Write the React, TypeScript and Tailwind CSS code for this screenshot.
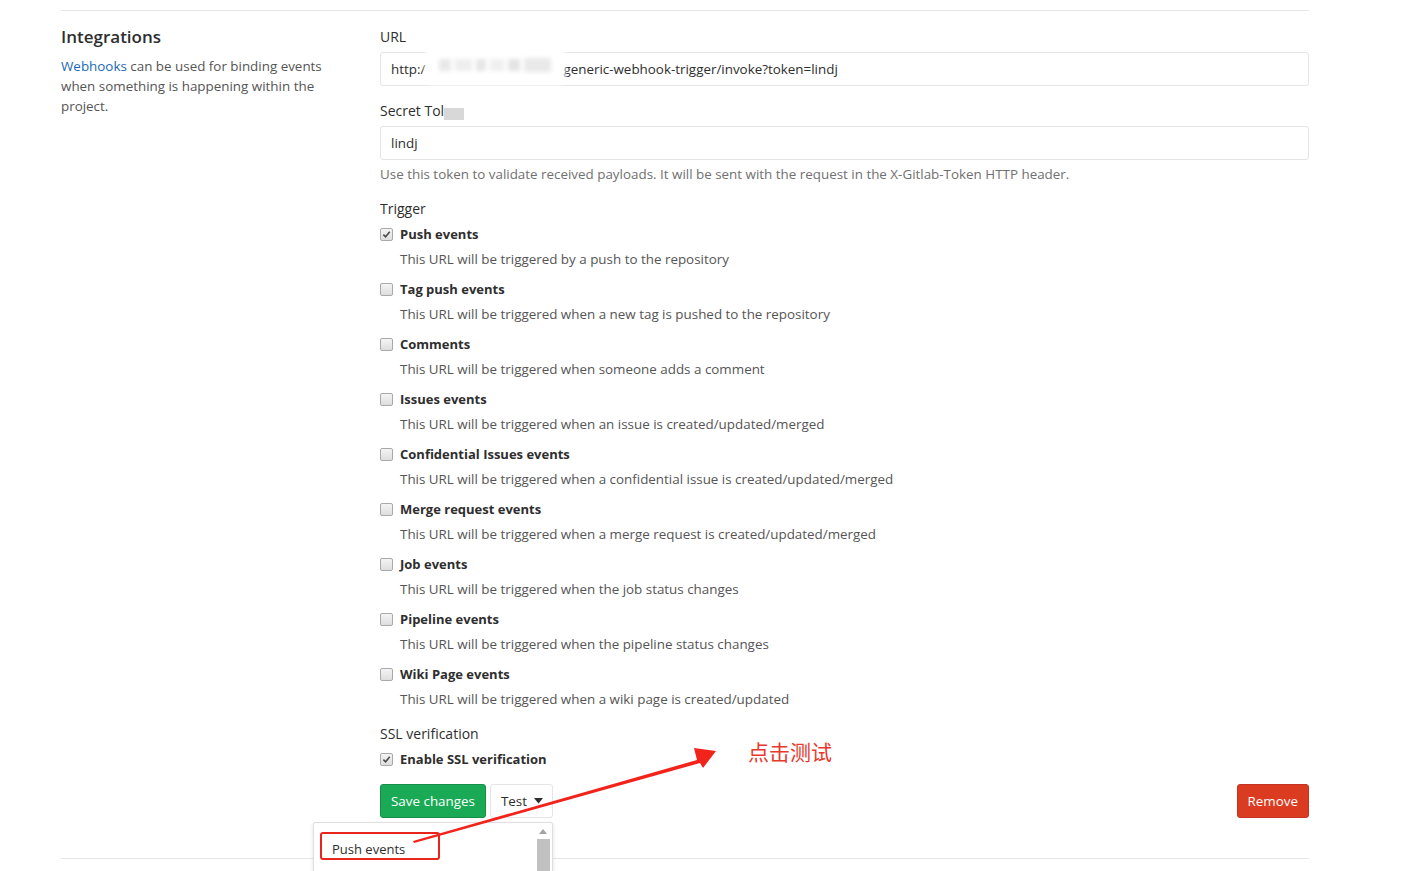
import React from "react";

const triggers = [
  { title: "Push events", desc: "This URL will be triggered by a push to the repository", checked: true },
  { title: "Tag push events", desc: "This URL will be triggered when a new tag is pushed to the repository" },
  { title: "Comments", desc: "This URL will be triggered when someone adds a comment" },
  { title: "Issues events", desc: "This URL will be triggered when an issue is created/updated/merged" },
  { title: "Confidential Issues events", desc: "This URL will be triggered when a confidential issue is created/updated/merged" },
  { title: "Merge request events", desc: "This URL will be triggered when a merge request is created/updated/merged" },
  { title: "Job events", desc: "This URL will be triggered when the job status changes" },
  { title: "Pipeline events", desc: "This URL will be triggered when the pipeline status changes" },
  { title: "Wiki Page events", desc: "This URL will be triggered when a wiki page is created/updated" },
];

function Check({ checked }: { checked?: boolean }) {
  return (
    <span className="w-[13px] h-[13px] shrink-0 rounded-[2px] border border-[#a9a9a9] bg-gradient-to-b from-[#f4f4f4] to-[#dedede] flex items-center justify-center">
      {checked && (
        <svg width="9" height="9" viewBox="0 0 10 10">
          <path d="M1.5 5.2 L4 7.6 L8.6 2" fill="none" stroke="#4a4a4a" strokeWidth="1.8" />
        </svg>
      )}
    </span>
  );
}

export default function App() {
  return (
    <div
      className="relative w-[1414px] h-[871px] overflow-hidden bg-white text-[#2e2e2e]"
      style={{ fontFamily: '"Open Sans", "Noto Sans", sans-serif' }}
    >
      <div className="ml-[61px] w-[1248px] mt-[10px] border-t border-[#e5e5e5] pt-[16px] flex">
        {/* left column */}
        <div className="w-[319px] shrink-0">
          <h4 className="text-[17px] font-semibold leading-[20px] text-[#2e2e2e]">Integrations</h4>
          <p className="mt-[9px] w-[268px] text-[13.4px] leading-[20px] text-[#555]">
            <span className="text-[#1b69b6]">Webhooks</span> can be used for binding events when something is happening within the project.
          </p>
        </div>

        {/* right column */}
        <div className="flex-1 text-[13.4px]">
          <div className="leading-[20px] text-[14px]">URL</div>
          <div className="relative mt-[5px] h-[34px] border border-[#e5e5e5] rounded-[3px] px-[10px] flex items-center">
            <span>http:/</span>
            <span className="w-[138px] shrink-0" />
            <span>generic-webhook-trigger/invoke?token=lindj</span>
            <div className="absolute left-[44px] top-[-8px] w-[140px] h-[40px] bg-white rounded-[8px] blur-[2px] flex items-center gap-[4px] px-[14px]">
              <span className="w-[12px] h-[12px] bg-[#e8e8e8]" />
              <span className="w-[18px] h-[12px] bg-[#eeeeee]" />
              <span className="w-[10px] h-[12px] bg-[#e6e6e6]" />
              <span className="w-[14px] h-[12px] bg-[#efefef]" />
              <span className="w-[12px] h-[12px] bg-[#e4e4e4]" />
              <span className="w-[28px] h-[14px] bg-[#e9e9e9]" />
            </div>
          </div>

          <div className="mt-[15px] leading-[20px] text-[14px] flex items-center">
            Secret Tol<span className="w-[20px] h-[12px] bg-[#d8d8d8] mt-[6px] blur-[0.5px]" />
          </div>
          <div className="mt-[5px] h-[34px] border border-[#e5e5e5] rounded-[3px] px-[10px] flex items-center">
            lindj
          </div>
          <p className="mt-[5px] leading-[18px] text-[#707070]">
            Use this token to validate received payloads. It will be sent with the request in the X-Gitlab-Token HTTP header.
          </p>

          <div className="mt-[16px] leading-[20px] text-[14px]">Trigger</div>
          <ul className="mt-[5px]">
            {triggers.map((t) => (
              <li key={t.title} className="mb-[10px]">
                <div className="flex items-center gap-[7px] leading-[20px]">
                  <Check checked={t.checked} />
                  <span className="font-bold text-[13px] text-[#2e2e2e]">{t.title}</span>
                </div>
                <div className="mt-[5px] pl-[20px] leading-[20px] text-[#555]">{t.desc}</div>
              </li>
            ))}
          </ul>

          <div className="mt-[15px] leading-[20px] text-[14px]">SSL verification</div>
          <div className="mt-[5px] flex items-center gap-[7px] leading-[20px]">
            <Check checked />
            <span className="font-bold text-[13px]">Enable SSL verification</span>
          </div>

          <div className="relative mt-[15px] flex items-center">
            <button className="h-[34px] px-[10px] rounded-[3px] bg-[#1aaa55] border border-[#168f48] text-white">
              Save changes
            </button>
            <button className="ml-[4px] h-[34px] pl-[10px] pr-[9px] rounded-[3px] bg-white border border-[#e5e5e5] flex items-center gap-[7px]">
              Test
              <svg width="9" height="6" viewBox="0 0 9 6"><path d="M0 0 L9 0 L4.5 5.5 Z" fill="#2e2e2e" /></svg>
            </button>
            <button className="ml-auto h-[34px] px-[10px] rounded-[3px] bg-[#db3b21] border border-[#c33423] text-white">
              Remove
            </button>

            {/* open test dropdown */}
            <div className="absolute left-[-67px] top-[38px] z-10 w-[240px] h-[80px] bg-white border border-[#dfdfdf] rounded-[2px] shadow-[0_2px_4px_rgba(0,0,0,0.12)]">
              <div className="px-[18px] pt-[16px] text-[13px] leading-[20px]">Push events</div>
              <div className="absolute right-[2px] top-[2px] w-[14px] h-full flex flex-col items-center">
                <svg width="8" height="5" viewBox="0 0 8 5" className="mt-[4px]"><path d="M0 5 L4 0 L8 5 Z" fill="#a3a3a3" /></svg>
                <div className="mt-[5px] w-[13px] flex-1 bg-[#c1c1c1]" />
              </div>
            </div>
          </div>
        </div>
      </div>

      {/* bottom divider */}
      <div className="absolute left-[61px] w-[1248px] top-[858px] border-t border-[#e5e5e5]" />

      {/* annotation */}
      <div className="absolute left-[320px] top-[832px] z-20 w-[120px] h-[28px] border-2 border-[#e8251c] rounded-[3px]" />
      <svg className="absolute inset-0 z-20 pointer-events-none" width="1414" height="871">
        <polygon points="413,841 697,760 694,748 716,751 703,768 700,763 414,843" fill="#f2231b" />
      </svg>
      <div
        className="absolute left-[748px] top-[737px] z-20 text-[21px] leading-[28px] text-[#e8372c]"
        style={{ fontFamily: '"Noto Sans CJK SC", sans-serif' }}
      >
        点击测试
      </div>
    </div>
  );
}
